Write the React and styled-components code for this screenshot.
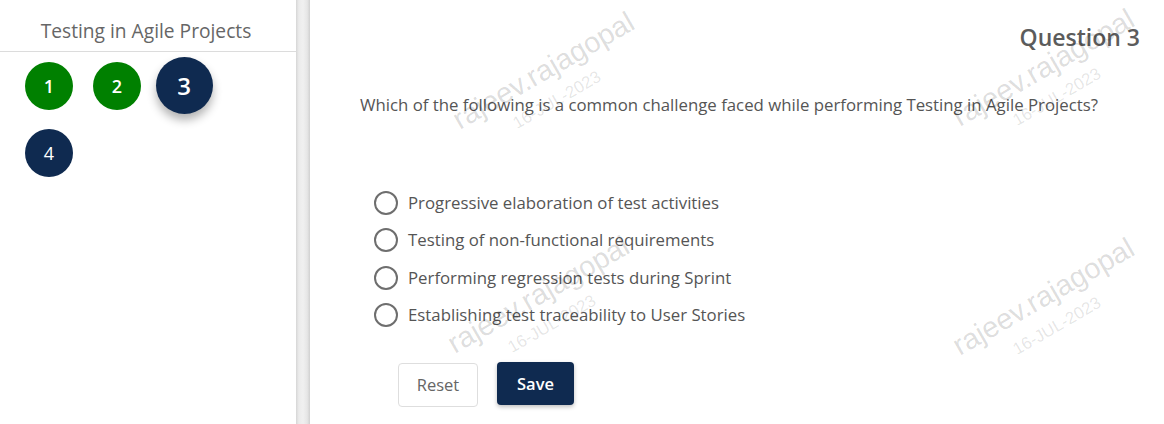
import styled, { createGlobalStyle } from "styled-components";

const Global = createGlobalStyle`
  html, body { margin: 0; padding: 0; background: #fff; }
  body { font-family: "Open Sans", "Noto Sans", sans-serif; }
`;

const options = [
  "Progressive elaboration of test activities",
  "Testing of non-functional requirements",
  "Performing regression tests during Sprint",
  "Establishing test traceability to User Stories",
];

// watermark centres
const marks = [
  { x: 550, y: 82 },
  { x: 1050, y: 79 },
  { x: 545, y: 306 },
  { x: 1050, y: 308 },
];

const App = () => {
  return (
    <>
      <Global />
      <Page>
        <Sidebar>
          <SideTitle>Testing in Agile Projects</SideTitle>
          <Bubbles>
            <Bubble $state="done">1</Bubble>
            <Bubble $state="done">2</Bubble>
            <Bubble $state="current">3</Bubble>
            <Bubble $state="todo">4</Bubble>
          </Bubbles>
        </Sidebar>
        <Splitter />
        <Main>
          <QNumber>Question 3</QNumber>
          <QText>
            Which of the following is a common challenge faced while performing
            Testing in Agile Projects?
          </QText>
          <Options>
            {options.map((o) => (
              <Option key={o}>
                <Radio />
                <span>{o}</span>
              </Option>
            ))}
          </Options>
          <Actions>
            <ResetBtn>Reset</ResetBtn>
            <SaveBtn>Save</SaveBtn>
          </Actions>
        </Main>
        {marks.map((m, i) => (
          <Watermark key={i} style={{ left: m.x, top: m.y }}>
            <div className="name">rajeev.rajagopal</div>
            <div className="date">16-JUL-2023</div>
          </Watermark>
        ))}
      </Page>
    </>
  );
};

const Page = styled.div`
  position: relative;
  display: flex;
  width: 1164px;
  height: 424px;
  overflow: hidden;
  background: #fff;
`;

const Sidebar = styled.div`
  width: 296px;
  flex-shrink: 0;
  display: flex;
  flex-direction: column;
`;

const SideTitle = styled.div`
  height: 52px;
  box-sizing: border-box;
  border-bottom: 1px solid #dcdcdc;
  text-align: center;
  font-size: 19.2px;
  line-height: 62px;
  color: #666;
  padding-right: 4px;
`;

const Bubbles = styled.div`
  display: grid;
  grid-template-columns: repeat(3, 68px);
  grid-auto-rows: 67px;
  align-items: center;
  justify-items: center;
  padding: 0 0 0 15px;
`;

const Bubble = styled.div`
  width: ${(p) => (p.$state === "current" ? "57px" : "48px")};
  height: ${(p) => (p.$state === "current" ? "57px" : "48px")};
  border-radius: 50%;
  display: flex;
  align-items: center;
  justify-content: center;
  color: #fff;
  font-size: ${(p) => (p.$state === "current" ? "24px" : "18px")};
  font-weight: ${(p) => (p.$state === "todo" ? 400 : 600)};
  background: ${(p) => (p.$state === "done" ? "#008000" : "#0f2a50")};
  box-shadow: ${(p) =>
    p.$state === "current" ? "0 6px 10px rgba(0,0,0,0.3)" : "none"};
  ${(p) => p.$state === "current" && "margin-left: -2px;"}
`;

const Splitter = styled.div`
  width: 14px;
  flex-shrink: 0;
  background: linear-gradient(
    90deg,
    #d6d6d6 0%,
    #ebebeb 20%,
    #f0f0f0 50%,
    #e6e6e6 80%,
    #d0d0d0 100%
  );
`;

const Main = styled.div`
  flex: 1;
  display: flex;
  flex-direction: column;
  padding: 22px 24px 0 50px;
`;

const QNumber = styled.div`
  align-self: flex-end;
  font-size: 23px;
  font-weight: 600;
  color: #5c5c5c;
  line-height: 30px;
`;

const QText = styled.div`
  margin-top: 42px;
  font-size: 16.8px;
  line-height: 22px;
  color: #555;
`;

const Options = styled.div`
  margin-top: 75px;
  margin-left: 14px;
  display: flex;
  flex-direction: column;
  gap: 13.3px;
`;

const Option = styled.label`
  display: flex;
  align-items: center;
  gap: 10px;
  font-size: 16.8px;
  line-height: 24px;
  color: #555;
`;

const Radio = styled.span`
  width: 20px;
  height: 20px;
  border: 2px solid #6e6e6e;
  border-radius: 50%;
  box-sizing: content-box;
  flex-shrink: 0;
`;

const Actions = styled.div`
  margin-top: 35px;
  margin-left: 38px;
  display: flex;
  align-items: flex-start;
  gap: 19px;
`;

const ResetBtn = styled.button`
  width: 80px;
  height: 44px;
  background: #fff;
  border: 1px solid #dedede;
  border-radius: 4px;
  font-family: inherit;
  font-size: 16.5px;
  color: #666;
  margin-top: 1px;
`;

const SaveBtn = styled.button`
  width: 77px;
  height: 43px;
  background: #0f2a50;
  border: none;
  border-radius: 4px;
  font-family: inherit;
  font-size: 16.5px;
  font-weight: 600;
  color: #fff;
  box-shadow: 0 2px 4px rgba(0, 0, 0, 0.25);
`;

const Watermark = styled.div`
  position: absolute;
  pointer-events: none;
  transform: translate(-50%, -50%) rotate(-30deg);
  color: rgba(0, 0, 0, 0.14);
  font-family: "Liberation Sans", Arial, sans-serif;
  .name {
    font-size: 29px;
    line-height: 1;
    white-space: nowrap;
  }
  .date {
    font-size: 17px;
    line-height: 1;
    margin-top: 9px;
    padding-left: 50px;
    white-space: nowrap;
    color: rgba(0, 0, 0, 0.11);
  }
`;

export default App;
